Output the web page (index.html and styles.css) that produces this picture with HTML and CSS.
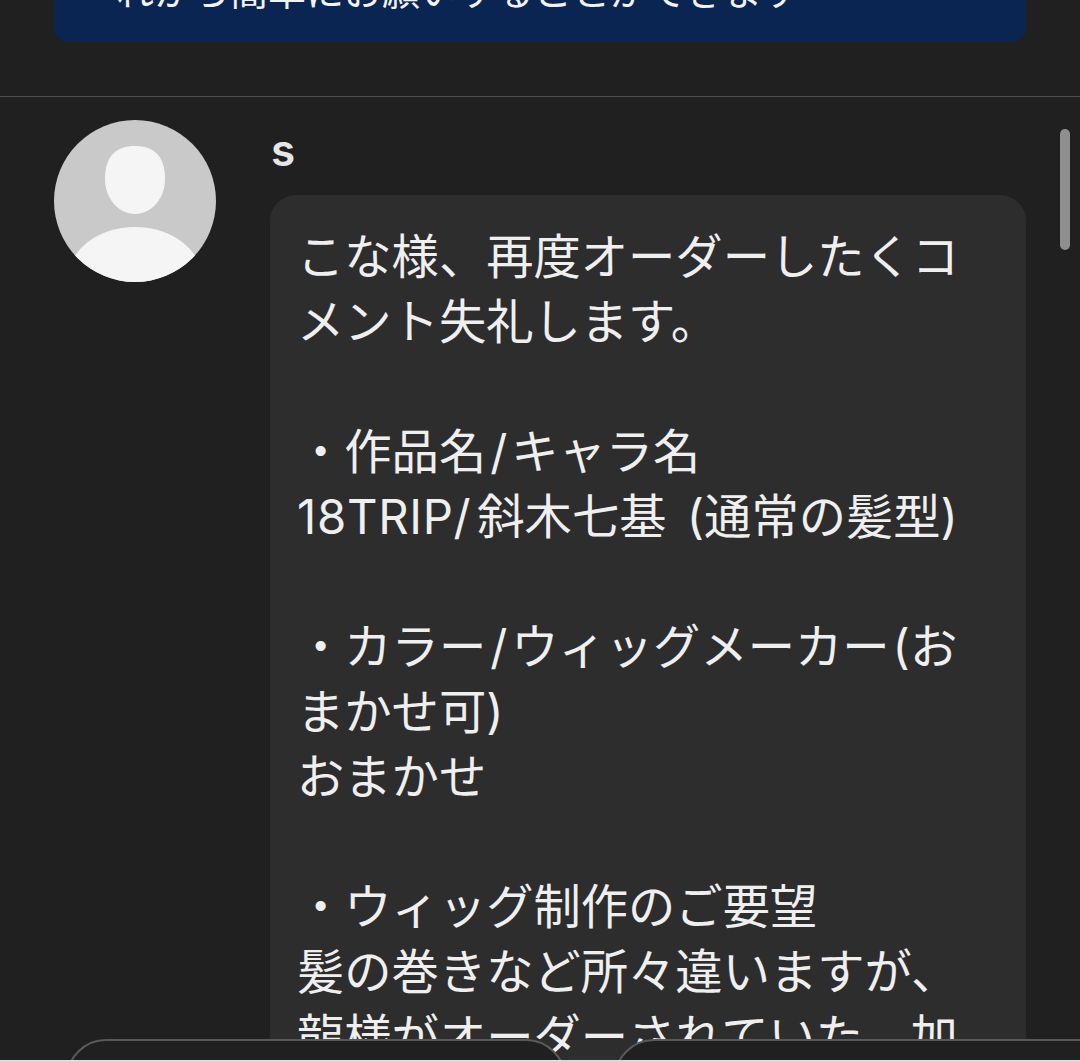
FILE: index.html
```html
<!DOCTYPE html>
<html lang="ja">
<head>
<meta charset="utf-8">
<title>コメント</title>
<link rel="stylesheet" href="styles.css">
</head>
<body>
<div class="screen">
  <section class="notice-wrap">
    <div class="notice"><p class="notice-text">れから簡単にお願いすることができます</p></div>
  </section>
  <section class="comment">
    <div class="avatar">
      <svg viewBox="0 0 162 162" width="162" height="162" aria-hidden="true">
        <defs><clipPath id="c"><circle cx="81" cy="81" r="81"/></clipPath></defs>
        <circle cx="81" cy="81" r="81" fill="#c9c9c9"/>
        <path d="M81 26C100 26 111 36 111 59C111 79 97 94 81 94C65 94 51 79 51 59C51 36 62 26 81 26Z" fill="#f5f5f5"/>
        <ellipse cx="81" cy="161" rx="68" ry="54" fill="#f5f5f5" clip-path="url(#c)"/>
      </svg>
    </div>
    <div class="body">
      <div class="name">s</div>
      <div class="bubble">
        <p class="line">こな様、再度オーダーしたくコ</p>
        <p class="line">メント失礼します。</p>
        <p class="line">&nbsp;</p>
        <p class="line">・作品名<span class="sep">/</span>キャラ名</p>
        <p class="line"><span class="latin">18TRIP/</span>斜木七基 <span class="paren-wide">(</span>通常の髪型)</p>
        <p class="line">&nbsp;</p>
        <p class="line">・カラー<span class="sep">/</span>ウィッグメーカー<span class="paren">(</span>お</p>
        <p class="line">まかせ可)</p>
        <p class="line">おまかせ</p>
        <p class="line">&nbsp;</p>
        <p class="line">・ウィッグ制作のご要望</p>
        <p class="line">髪の巻きなど所々違いますが、</p>
        <p class="line">龍様がオーダーされていた、加</p>
      </div>
    </div>
    <div class="scrollbar"></div>
  </section>
  <div class="bottom">
    <div class="pill pill-left"></div>
    <div class="pill pill-right"></div>
    <div class="edge"></div>
  </div>
</div>
</body>
</html>
```
FILE: styles.css
```css
* { box-sizing: border-box; }
html, body { margin: 0; padding: 0; height: 100%; }
body { background: #202020; overflow: hidden; }
.screen {
  position: relative;
  width: 1080px;
  height: 1061px;
  overflow: hidden;
  background: #202020;
  font-family: "Inter", "Noto Sans CJK JP", sans-serif;
  color: #f0f0f0;
}
.notice-wrap {
  height: 97px;
  padding: 0 54px;
  border-bottom: 1px solid #505050;
}
.notice {
  height: 42px;
  background: #0b2553;
  border-radius: 0 0 14px 14px;
  overflow: hidden;
  padding-left: 62px;
}
.notice-text {
  margin: -32px 0 0;
  font-size: 38px;
  line-height: 46px;
  color: #f2f2f2;
}
.comment {
  position: relative;
  display: flex;
  gap: 54px;
  padding: 23px 54px 0;
}
.avatar { flex: none; width: 162px; height: 162px; }
.avatar svg { display: block; }
.body { flex: 1; min-width: 0; }
.name {
  font-weight: 600;
  font-size: 44px;
  line-height: 44px;
  padding: 8px 0 0 1px;
  margin-bottom: 23px;
  color: #e6e6e6;
}
.bubble {
  background: #2d2d2d;
  border-radius: 26px;
  padding: 29px 27px 0;
  height: 900px;
}
.line {
  margin: 0;
  font-size: 47.3px;
  line-height: 65px;
  white-space: nowrap;
  color: #efefef;
}
.sep { padding: 0 4px; }
.latin { letter-spacing: 0.7px; padding-right: 6px; }
.paren { padding-left: 3px; }
.paren-wide { padding-left: 7px; }
.scrollbar {
  position: absolute;
  top: 32px;
  right: 10px;
  width: 10px;
  height: 121px;
  border-radius: 5px;
  background: #8f8f8f;
}
.bottom {
  position: absolute;
  left: 0;
  right: 0;
  bottom: 0;
  height: 22px;
  overflow: hidden;
}
.pill {
  position: absolute;
  top: 0;
  height: 80px;
  background: #202020;
  border: 2px solid #5a5a5a;
  border-radius: 40px;
}
.pill-left { left: 66px; width: 500px; }
.pill-right { left: 614px; width: 520px; }
.edge {
  position: absolute;
  left: 0;
  right: 0;
  bottom: 0;
  height: 1px;
  background: #e2e2e2;
}
```
